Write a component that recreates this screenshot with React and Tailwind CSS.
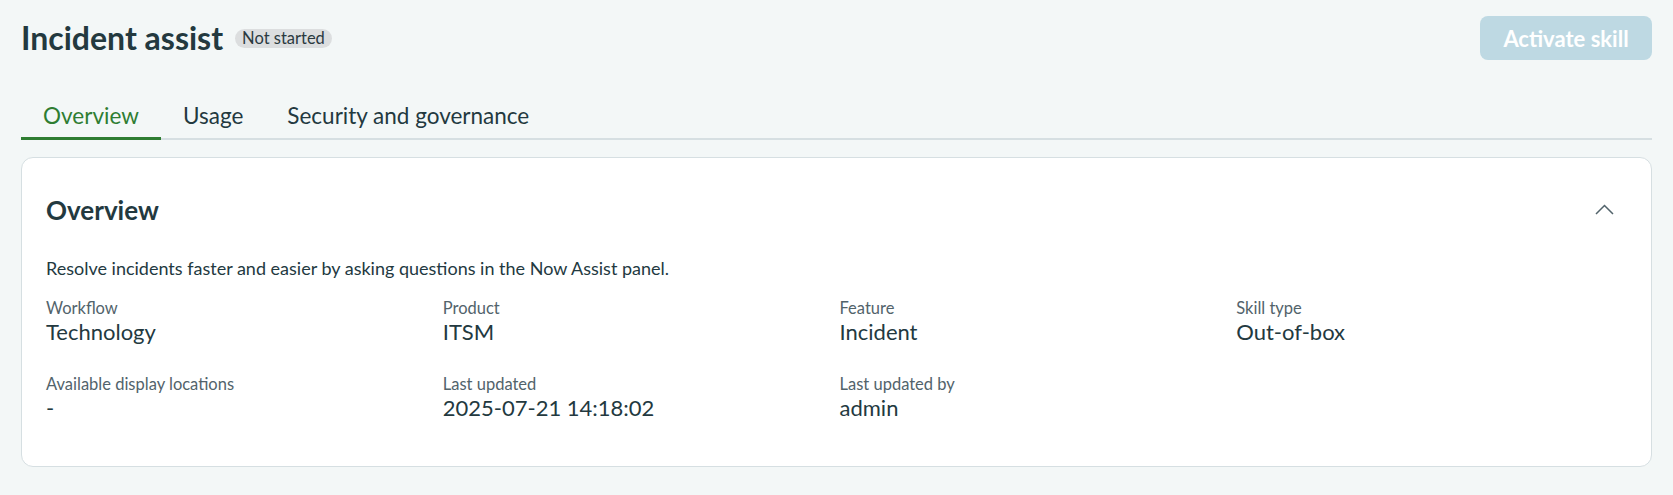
const fields = [
  { label: "Workflow", value: "Technology" },
  { label: "Product", value: "ITSM" },
  { label: "Feature", value: "Incident" },
  { label: "Skill type", value: "Out-of-box" },
  { label: "Available display locations", value: "-" },
  { label: "Last updated", value: "2025-07-21 14:18:02" },
  { label: "Last updated by", value: "admin" },
];

export default function App() {
  return (
    <div className="min-h-[495px] bg-[#f3f7f7] px-[21px] pt-4 pb-[29px] text-[#23393f] font-['Lato','Liberation_Sans',sans-serif]">
      <div className="flex items-start justify-between">
        <div className="flex items-center gap-3">
          <h1 className="text-[32px] font-bold leading-[44px]">Incident assist</h1>
          <span className="mt-[1px] rounded-full bg-[#dcdedf] px-[7px] text-[16.5px] leading-[19px] text-[#2b3a3f]">
            Not started
          </span>
        </div>
        <button className="h-[44px] w-[172px] rounded-lg bg-[#bed9e3] text-[22px] font-bold text-white">
          Activate skill
        </button>
      </div>

      <div className="mt-[39px] flex border-b-2 border-[#d6dfe2]">
        <div className="-mb-[2px] w-[140px] border-b-[3px] border-[#2e7d32] pb-[4px] text-center text-[22.5px] text-[#2e7d32]">
          Overview
        </div>
        <div className="pb-[4px] pl-[22px] text-[22.5px]">Usage</div>
        <div className="pb-[4px] pl-[44px] text-[22.5px]">Security and governance</div>
      </div>

      <div className="mt-[17px] rounded-xl border border-[#d6dfe2] bg-white pl-6 pr-[18px] pt-[36px] pb-[44px]">
        <div className="flex items-center justify-between">
          <h2 className="text-[26px] font-bold leading-8">Overview</h2>
          <svg width="19" height="11" viewBox="0 0 19 11" className="mr-[19px]" fill="none">
            <polyline points="1,10 9.5,1.5 18,10" stroke="#52636b" strokeWidth="1.5" />
          </svg>
        </div>
        <p className="mt-[30px] text-[18px] leading-6">
          Resolve incidents faster and easier by asking questions in the Now Assist panel.
        </p>
        <div className="mt-[18px] grid grid-cols-4 gap-y-[28px]">
          {fields.map((f) => (
            <div key={f.label}>
              <div className="text-[16.5px] leading-5 text-[#52636b]">{f.label}</div>
              <div className="text-[22px] leading-7">{f.value}</div>
            </div>
          ))}
        </div>
      </div>
    </div>
  );
}
